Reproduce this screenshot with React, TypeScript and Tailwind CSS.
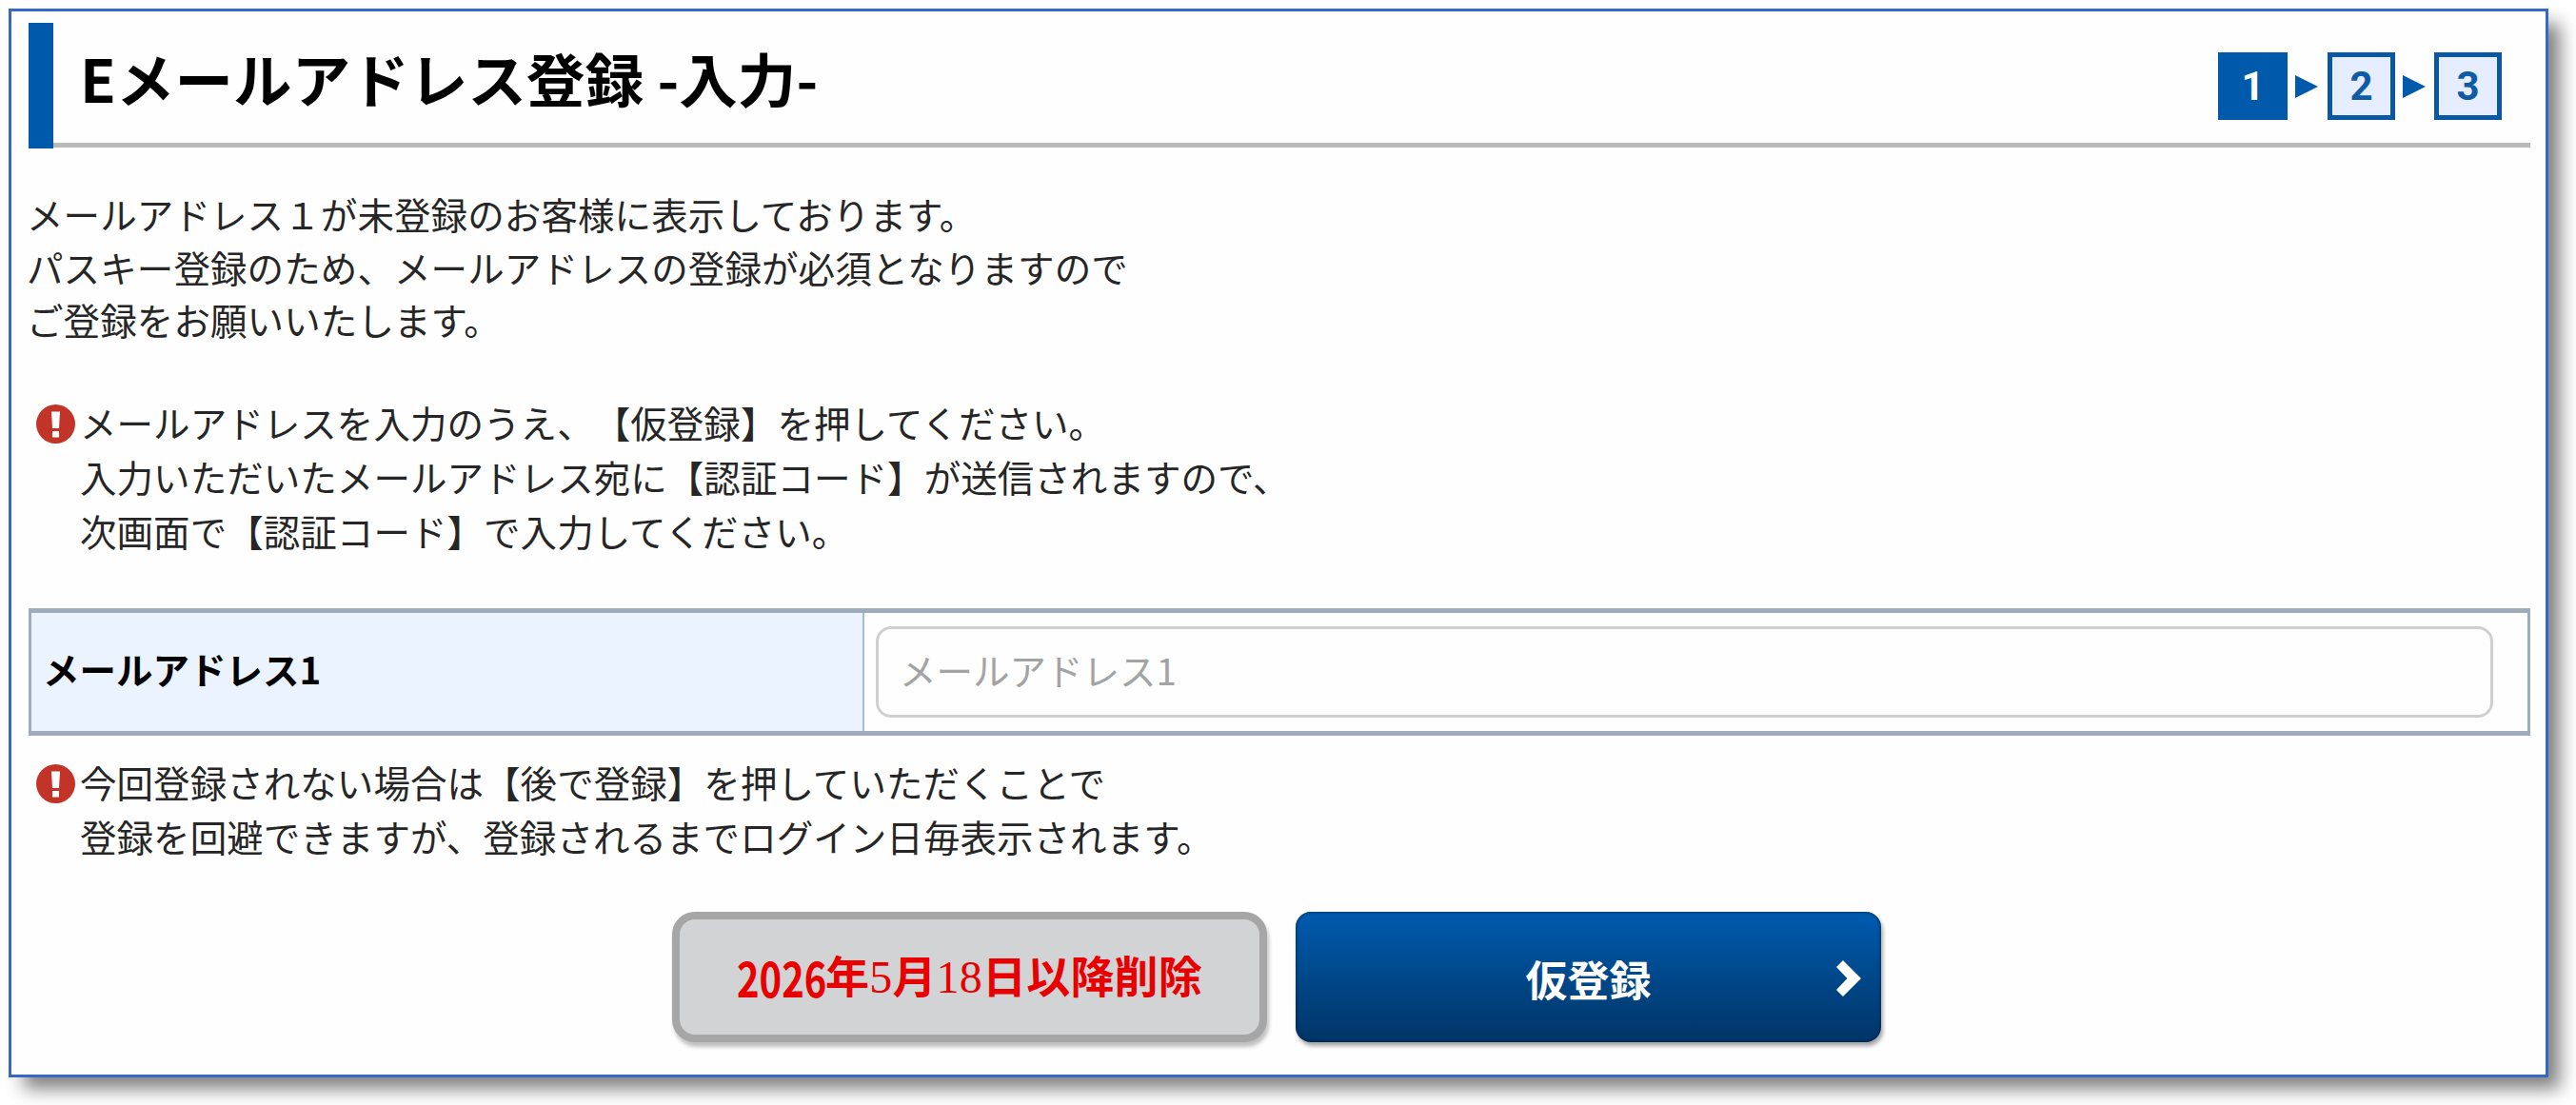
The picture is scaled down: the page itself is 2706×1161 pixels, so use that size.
import React from "react";

function StepArrow() {
  return (
    <svg className="mt-6 h-6 w-6 shrink-0" viewBox="0 0 24 24" aria-hidden="true">
      <path d="M0 0L24 12L0 24Z" fill="#0059ab" />
    </svg>
  );
}

function Alert({ lines }: { lines: string[] }) {
  return (
    <div className="flex">
      <svg className="mt-[10px] mr-[5px] ml-2 h-[41px] w-[41px] shrink-0" viewBox="0 0 41 41" aria-hidden="true">
        <circle cx="20.5" cy="20.5" r="20.5" fill="#c23428" />
        <path d="M16 7.500H25L24 25H17Z" fill="#fff" />
        <rect x="17" y="28" width="7" height="6.500" fill="#fff" />
      </svg>
      <div>
        {lines.map((line) => (
          <p key={line} className="leading-[57px] tracking-[0.05px]">{line}</p>
        ))}
      </div>
    </div>
  );
}

export default function App() {
  return (
    <div className="h-[1161px] w-[2706px] overflow-hidden bg-white p-[9px] font-['Noto_Sans_CJK_JP',sans-serif] text-[38.5px] whitespace-nowrap text-[#262626] [font-feature-settings:'chws'_0] [text-spacing-trim:space-all]">
      <main className="h-[1123px] w-[2668px] border-[3px] border-[#3567c4] bg-[#fefefe] pt-3 pr-4 pl-[18px] shadow-[14px_14px_18px_-2px_rgba(0,0,0,0.5)]">
        <header className="flex h-[132px]">
          <div className="w-[26px] shrink-0 bg-[#0059ab]" />
          <div className="mb-[1px] flex flex-1 justify-between border-b-[5px] border-[#bababa] pr-[30px] pl-[28px]">
            <h1 className="text-[61.5px] leading-[116px] font-bold tracking-[0.1px] text-black">Eメールアドレス登録 -入力-</h1>
            <ol className="mt-[31px] flex font-['Roboto',sans-serif] text-[42px] leading-none font-bold text-[#0f5ba5]">
              <li className="flex h-[71px] w-[73px] items-center justify-center bg-[#0059ab] text-white">1</li>
              <li className="ml-2 flex">
                <StepArrow />
                <span className="ml-2.5 flex h-[71px] w-[71px] items-center justify-center border-[5px] border-[#0a58a3] bg-[#e5edff]">2</span>
              </li>
              <li className="ml-2 flex">
                <StepArrow />
                <span className="ml-[9px] flex h-[71px] w-[71px] items-center justify-center border-[5px] border-[#0a58a3] bg-[#e5edff]">3</span>
              </li>
            </ol>
          </div>
        </header>

        <p className="mt-[41px] -ml-0.5 leading-[55.500px] tracking-[0.1px]">
          メールアドレス１が未登録のお客様に表示しております。<br />
          パスキー登録のため、メールアドレスの登録が必須となりますので<br />
          ご登録をお願いいたします。
        </p>

        <div className="mt-[51px]">
          <Alert
            lines={[
              "メールアドレスを入力のうえ、【仮登録】を押してください。",
              "入力いただいたメールアドレス宛に【認証コード】が送信されますので、",
              "次画面で【認証コード】で入力してください。",
            ]}
          />
        </div>

        <div className="mt-[53px] flex h-[134px] border-x-[3px] border-y-[5px] border-[#9dabbd]">
          <label htmlFor="mail" className="flex w-[875px] shrink-0 items-center border-r-2 border-[#a9bccf] bg-[#ebf3ff] pb-[5px] pl-[12px] font-bold text-black">
            メールアドレス1
          </label>
          <div className="flex flex-1 items-center pr-9 pl-3">
            <input
              id="mail"
              placeholder="メールアドレス1"
              className="h-24 w-full rounded-[16px] border-[3px] border-[#cfcfcf] bg-[#fefefe] px-[22px] pb-[5px] placeholder:text-[#a3a3a3]"
            />
          </div>
        </div>

        <div className="mt-[20px]">
          <Alert
            lines={[
              "今回登録されない場合は【後で登録】を押していただくことで",
              "登録を回避できますが、登録されるまでログイン日毎表示されます。",
            ]}
          />
        </div>

        <div className="mt-[51px] ml-[676px] flex gap-[30px]">
          <button className="flex h-[137px] w-[625px] items-center rounded-[24px] border-8 border-[#a6a6a6] bg-[#d2d3d5] pl-[60px] text-[46px] font-bold text-[#e80000] shadow-[2px_5px_4px_rgba(0,0,0,0.25)]">
            <span className="w-[93px] text-left">
              <span className="inline-block origin-left scale-x-[0.77] text-[52px]">2026</span>
            </span>
            <span className="tracking-[0.2px]">
              年<span className="font-['Liberation_Serif',serif] text-[48px] font-normal">5</span>月
              <span className="font-['Liberation_Serif',serif] text-[48px] font-normal">18</span>日以降削除
            </span>
          </button>
          <button className="relative h-[137px] w-[615px] rounded-[16px] bg-linear-to-b from-[#005bb0] to-[#003566] pt-1 text-[44px] font-bold text-white shadow-[2px_4px_4px_rgba(0,0,0,0.35),inset_0_0_3px_1px_rgba(0,30,60,0.6)]">
            仮登録
            <svg className="absolute top-[51px] right-[21px] h-[38px] w-[26px]" viewBox="0 0 26 38" aria-hidden="true">
              <path d="M7 0L26 19L7 38L0 31L11.500 19L0 7Z" fill="#fff" />
            </svg>
          </button>
        </div>
      </main>
    </div>
  );
}
